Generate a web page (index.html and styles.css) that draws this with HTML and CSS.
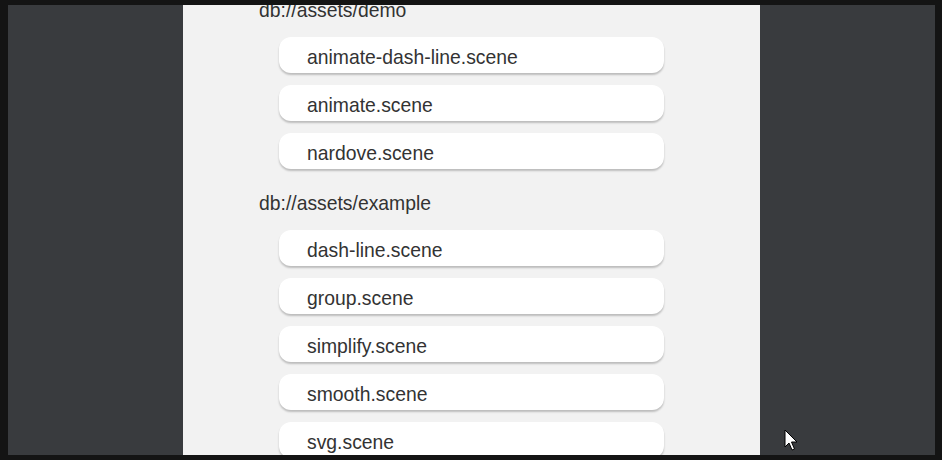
FILE: index.html
```html
<!DOCTYPE html>
<html>
<head>
<meta charset="utf-8">
<link rel="stylesheet" href="styles.css">
</head>
<body>
<div class="frame">
  <div class="panel">
    <div class="content">
      <div class="group">
        <div class="group-title">db://assets/demo</div>
        <div class="item">animate-dash-line.scene</div>
        <div class="item">animate.scene</div>
        <div class="item">nardove.scene</div>
      </div>
      <div class="group">
        <div class="group-title">db://assets/example</div>
        <div class="item">dash-line.scene</div>
        <div class="item">group.scene</div>
        <div class="item">simplify.scene</div>
        <div class="item">smooth.scene</div>
        <div class="item">svg.scene</div>
      </div>
    </div>
  </div>
  <svg class="cursor" width="14" height="24" viewBox="0 0 14 24">
    <path d="M1 1 L1 18 L5 14 L8 21 L10.5 20 L7.5 13 L13 13 Z" fill="#fff" stroke="#000" stroke-width="1" stroke-linejoin="miter"/>
  </svg>
</div>
</body>
</html>
```
FILE: styles.css
```css
html, body {
  margin: 0;
  padding: 0;
  background: #141414;
  height: 460px;
  overflow: hidden;
}
.frame {
  position: relative;
  margin: 5px 7px 0 8px;
  height: 450px;
  background: #393b3e;
  display: flex;
  justify-content: center;
  overflow: hidden;
}
.panel {
  width: 577px;
  height: 100%;
  background: #f2f2f2;
  overflow: hidden;
}
.content {
  margin-top: -6px;
  padding-left: 76px;
  font-family: "Liberation Sans", Arial, sans-serif;
  font-size: 19.35px;
  color: #333;
  display: flex;
  flex-direction: column;
  gap: 23px;
}
.group {
  display: flex;
  flex-direction: column;
  gap: 12px;
}
.group-title {
  line-height: 23px;
  height: 23px;
  margin-bottom: 3px;
}
.item {
  margin-left: 20px;
  width: 385px;
  height: 36px;
  box-sizing: border-box;
  padding: 5px 0 0 28px;
  line-height: 31px;
  background: #fff;
  border-radius: 12px;
  box-shadow: 0 2px 2px rgba(0, 0, 0, 0.22);
  white-space: nowrap;
}
.cursor {
  position: absolute;
  left: 776px;
  top: 424px;
}
```
